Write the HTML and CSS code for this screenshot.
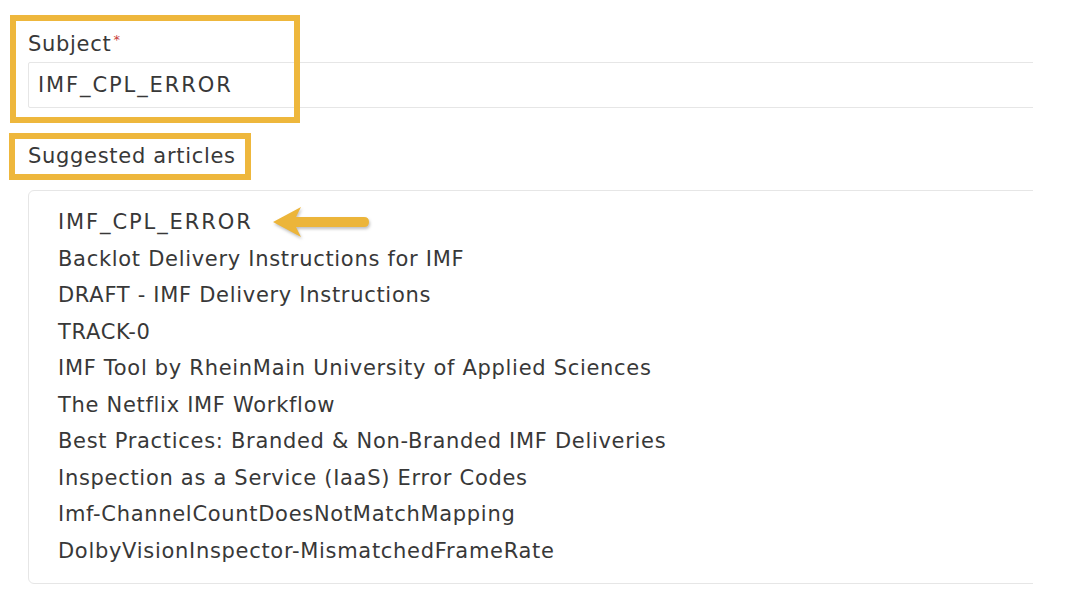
FILE: index.html
```html
<!DOCTYPE html>
<html>
<head>
<meta charset="utf-8">
<link rel="stylesheet" href="styles.css">
</head>
<body>
<div class="clip">
  <div class="form">
    <div class="field">
      <label class="label">Subject<span class="req">*</span></label>
      <div class="input"><span class="code">IMF_CPL_ERROR</span></div>
    </div>
    <div class="section-title">Suggested articles</div>
    <ul class="articles">
      <li class="first"><span class="code">IMF_CPL_ERROR</span>
        <svg class="arrow" width="100" height="36" viewBox="0 0 100 36">
          <path d="M2 18 L30 3 L25 13 L93 13 Q98 13 98 18 Q98 23 93 23 L25 23 L30 33 Z" fill="#ecb53a"/>
        </svg>
      </li>
      <li>Backlot Delivery Instructions for IMF</li>
      <li>DRAFT - IMF Delivery Instructions</li>
      <li>TRACK-0</li>
      <li>IMF Tool by RheinMain University of Applied Sciences</li>
      <li>The Netflix IMF Workflow</li>
      <li>Best Practices: Branded &amp; Non-Branded IMF Deliveries</li>
      <li>Inspection as a Service (IaaS) Error Codes</li>
      <li>Imf-ChannelCountDoesNotMatchMapping</li>
      <li>DolbyVisionInspector-MismatchedFrameRate</li>
    </ul>
  </div>
  <div class="hl hl-subject"></div>
  <div class="hl hl-suggested"></div>
</div>
</body>
</html>
```
FILE: styles.css
```css
html, body {
  margin: 0;
  padding: 0;
  background: #ffffff;
}
body {
  font-family: "DejaVu Sans", "Liberation Sans", sans-serif;
  color: #383838;
  letter-spacing: 0.7px;
}
.clip {
  position: relative;
  width: 1033px;
  height: 600px;
  overflow: hidden;
}
.form {
  width: 1100px;
  padding: 30px 0 0 28px;
  box-sizing: border-box;
}
.field {
  display: flex;
  flex-direction: column;
}
.label {
  font-size: 21px;
  line-height: 28px;
  height: 32px;
}
.req {
  color: #c9403a;
  font-size: 13px;
  vertical-align: top;
  margin-left: 2px;
  line-height: 20px;
}
.input {
  height: 46px;
  border: 1px solid #e6e6e6;
  box-sizing: border-box;
  padding-left: 9px;
  font-size: 21px;
  line-height: 44px;
  border-radius: 2px;
}
.code {
  letter-spacing: 1.9px;
}
.section-title {
  margin-top: 34px;
  font-size: 21px;
  line-height: 28px;
}
.articles {
  list-style: none;
  margin: 20px 0 0 0;
  padding: 13px 29px 14px;
  border: 1px solid #e6e6e6;
  border-radius: 6px;
  height: 394px;
  box-sizing: border-box;
}
.articles li {
  font-size: 21px;
  line-height: 36.5px;
  height: 36.5px;
  white-space: nowrap;
}
.articles li.first {
  display: flex;
  align-items: center;
}
.arrow {
  margin-left: 18px;
  filter: drop-shadow(1px 2px 1.5px rgba(0,0,0,0.25));
}
.hl {
  position: absolute;
  border: 6px solid #eeb73c;
  box-sizing: border-box;
  pointer-events: none;
}
.hl-subject {
  left: 10px;
  top: 15px;
  width: 290px;
  height: 108px;
}
.hl-suggested {
  left: 9px;
  top: 133px;
  width: 242px;
  height: 47px;
}
```
